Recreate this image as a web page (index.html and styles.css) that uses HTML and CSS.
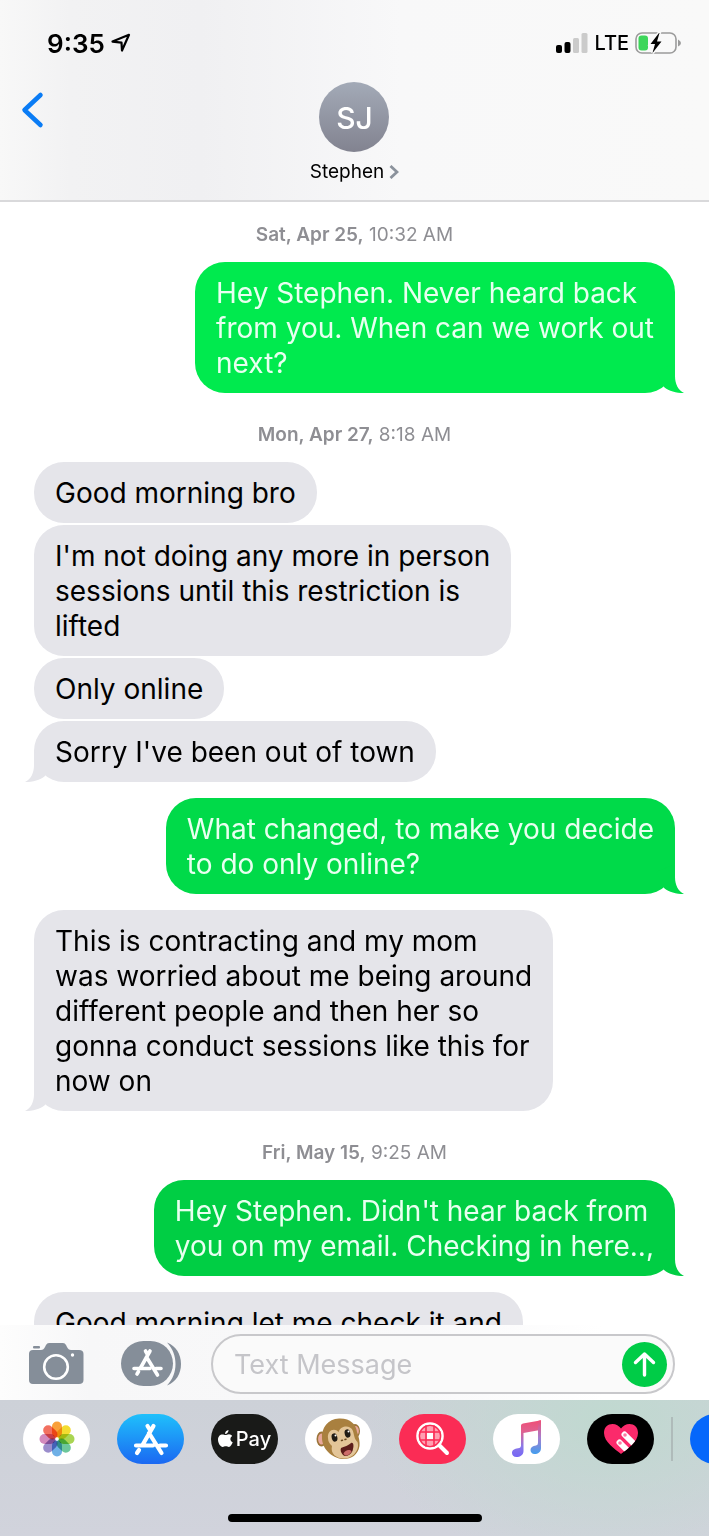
FILE: index.html
```html
<!DOCTYPE html>
<html lang="en">

<head>
  <meta charset="UTF-8">
  <meta name="viewport" content="width=device-width, initial-scale=1.0">
  <title>Stephen</title>
  <link rel="stylesheet" href="styles.css">
</head>

<body>
  <header class="header">
    <div class="status-bar">
      <div class="status-time">
        <span>9:35</span>
        <svg width="20" height="20" viewBox="0 0 20 20" fill="none" stroke="#000" stroke-width="2.2" stroke-linejoin="round"><path d="M1.500 8.600L18 1.800L11 17.500L10.500 9.600Z"/></svg>
      </div>
      <div class="status-icons">
        <svg width="32" height="20" viewBox="0 0 32 20">
          <rect x="0" y="12" width="6" height="8" rx="2"/>
          <rect x="8.500" y="9" width="6" height="11" rx="2"/>
          <rect x="17" y="5" width="6" height="15" rx="1.500" fill="#cbcbcb"/>
          <rect x="25.500" y="0" width="6" height="20" rx="1.500" fill="#cbcbcb"/>
        </svg>
        <span class="status-network">LTE</span>
        <svg width="46" height="22" viewBox="0 0 46 22">
          <rect x="1" y="1" width="40" height="20" rx="6" fill="none" stroke="#9b9b9b" stroke-width="1.600"/>
          <path d="M43 7.500Q46 9 46 11T43 14.500Z" fill="#9b9b9b"/>
          <rect x="3.500" y="3.500" width="9.500" height="15" rx="3" fill="#3dd65a"/>
          <path d="M24 1L15.500 12H20L17.500 21L26.500 9.500H22L24.500 1Z" fill="#000" stroke="#f9f9f9" stroke-width="3" paint-order="stroke"/>
        </svg>
      </div>
    </div>
    <div class="nav">
      <button class="back" aria-label="Back">
        <svg width="26" height="38" viewBox="0 0 26 38" fill="none" stroke="#0a7cf5" stroke-width="4.500" stroke-linecap="round" stroke-linejoin="round"><path d="M20.500 4L4.500 19L20.500 34"/></svg>
      </button>
      <button class="contact">
        <span class="avatar">SJ</span>
        <span class="contact-name">Stephen
          <svg width="10" height="14" viewBox="0 0 10 14" fill="none" stroke="#8b929c" stroke-width="2.800"><path d="M1.500 1L8 7L1.500 13"/></svg>
        </span>
      </button>
    </div>
  </header>

  <main class="thread">
    <p class="stamp"><b>Sat, Apr 25,</b> 10:32 AM</p>
    <div class="group sent">
      <p class="bubble tail green-light">Hey Stephen. Never heard back<br>from you. When can we work out<br>next?</p>
    </div>

    <p class="stamp"><b>Mon, Apr 27,</b> 8:18 AM</p>
    <div class="group received">
      <p class="bubble">Good morning bro</p>
      <p class="bubble">I'm not doing any more in person<br>sessions until this restriction is<br>lifted</p>
      <p class="bubble">Only online</p>
      <p class="bubble tail">Sorry I've been out of town</p>
    </div>
    <div class="group sent">
      <p class="bubble tail green-mid">What changed, to make you decide<br>to do only online?</p>
    </div>
    <div class="group received">
      <p class="bubble tail">This is contracting and my mom<br>was worried about me being around<br>different people and then her so<br>gonna conduct sessions like this for<br>now on</p>
    </div>

    <p class="stamp"><b>Fri, May 15,</b> 9:25 AM</p>
    <div class="group sent">
      <p class="bubble tail green-dark">Hey Stephen. Didn't hear back from<br>you on my email. Checking in here..,</p>
    </div>
    <div class="group received">
      <p class="bubble bubble-cut">Good morning let me check it and</p>
    </div>
  </main>

  <form class="compose">
    <button class="tool" type="button" aria-label="Camera">
      <svg width="56" height="44" viewBox="0 0 56 44">
        <rect x="5" y="4" width="7" height="2.500" rx="1" fill="#858e99"/>
        <path d="M5 8H13C15 8 16 7 17 5L18 3Q19 1 21 1H35Q37 1 38 3L39 5C40 7 41 8 43 8H51Q55.500 8 55.500 12V38Q55.500 42 51 42H5Q1 42 1 38V12Q1 8 5 8Z" fill="#858e99"/>
        <circle cx="28" cy="25" r="11.800" fill="none" stroke="#fff" stroke-width="2.600"/>
        <circle cx="44.500" cy="13" r="1.700" fill="#fff"/>
      </svg>
    </button>
    <button class="tool" type="button" aria-label="Apps">
      <svg width="60" height="46" viewBox="0 0 60 46">
        <path d="M46 1.500C55 5 60 13 60 23S55 41 46 44.500C52 38 54.500 31 54.500 23S52 8 46 1.500Z" fill="#858e99"/>
        <rect x="0" y="0" width="52" height="45" rx="22.500" fill="#858e99"/>
        <g fill="none" stroke="#fff" stroke-width="3.600" stroke-linecap="round">
          <path d="M24.500 10L26.500 13.500M29 10L19.500 27M25.500 16L36.500 34M17.500 30.500L16 33"/>
          <path d="M13 27.500H29M35 27.500H40"/>
        </g>
      </svg>
    </button>
    <div class="field">
      <input class="field-input" type="text" placeholder="Text Message" aria-label="Text Message">
      <button class="send" type="submit" aria-label="Send">
        <svg width="45" height="45" viewBox="0 0 45 45" fill="none" stroke="#fff" stroke-width="3.400" stroke-linecap="round" stroke-linejoin="round"><path d="M22.500 33V12M13.500 20.500L22.500 12L31.500 20.500"/></svg>
      </button>
    </div>
  </form>

  <footer class="drawer">
    <nav class="apps">
      <button class="app app-white" aria-label="Photos">
        <svg width="36" height="36" viewBox="-18 -18 36 36">
          <g class="petals">
            <rect x="-5" y="-17.500" width="10" height="16" rx="5" fill="#f9a03a"/>
            <rect x="-5" y="-17.500" width="10" height="16" rx="5" fill="#f3dc30" transform="rotate(45)"/>
            <rect x="-5" y="-17.500" width="10" height="16" rx="5" fill="#a9d552" transform="rotate(90)"/>
            <rect x="-5" y="-17.500" width="10" height="16" rx="5" fill="#6cc79b" transform="rotate(135)"/>
            <rect x="-5" y="-17.500" width="10" height="16" rx="5" fill="#6fb0e6" transform="rotate(180)"/>
            <rect x="-5" y="-17.500" width="10" height="16" rx="5" fill="#9b8dcc" transform="rotate(225)"/>
            <rect x="-5" y="-17.500" width="10" height="16" rx="5" fill="#d38abd" transform="rotate(270)"/>
            <rect x="-5" y="-17.500" width="10" height="16" rx="5" fill="#f27060" transform="rotate(315)"/>
          </g>
          <circle r="1.500" fill="#fff"/>
        </svg>
      </button>
      <button class="app app-store" aria-label="App Store">
        <svg width="38" height="34" viewBox="0 0 38 34" fill="none" stroke="#fff" stroke-width="4.200" stroke-linecap="round">
          <path d="M15.500 4L18 8M21.500 4L10.500 23M17 11L29.500 31M7 28L5 31M4 23.500H21M28 23.500H34"/>
        </svg>
      </button>
      <button class="app app-pay" aria-label="Apple Pay">
        <svg width="15" height="18" viewBox="0 0 15 18" fill="#fff">
          <path d="M10.500 0C10.600 2 9 4 7 4C7 2 8.600 .3 10.500 0Z"/>
          <path d="M7.500 5C8.500 5 9.300 4.200 11 4.200C12.300 4.200 13.500 5 14.200 6C11.500 7.500 12 11.300 14.700 12.300C14 14.300 12.500 17 10.900 17C9.700 17 9.300 16.300 7.800 16.300S5.800 17 4.700 17C2.500 17 0 13 0 9.700C0 6.300 2.200 4.400 4.300 4.400C5.700 4.400 6.500 5 7.500 5Z"/>
        </svg>
        <span>Pay</span>
      </button>
      <button class="app app-white" aria-label="Animoji">
        <svg width="46" height="44" viewBox="0 0 46 44">
          <ellipse cx="5.500" cy="22" rx="5" ry="7.500" fill="#9b7438"/>
          <ellipse cx="5.500" cy="22" rx="3.400" ry="5.500" fill="#e9a89c"/>
          <ellipse cx="39" cy="14" rx="5" ry="7" fill="#9b7438"/>
          <ellipse cx="39.500" cy="14" rx="3.400" ry="5" fill="#e9a89c"/>
          <path d="M6 22C5 11 12 2 23 1.500C34 1 40 7 41 15C43 20 44 25 43.500 29C42 38 35 42 28 42C18 42 7 34 6 22Z" fill="#a9803f"/>
          <path d="M12 21C11 14 18 10 22.500 15C25 8 34 8 36.500 13C38.500 18 38 22 41.500 25C44 33 37 41 29 41.500C21 42 14 37 16 29C14 27 12 25 12 21Z" fill="#e3c598"/>
          <ellipse cx="18.500" cy="20.500" rx="2.800" ry="4.200" transform="rotate(-14 18.500 20.500)" fill="#201b14"/>
          <ellipse cx="31.500" cy="16.500" rx="2.800" ry="4.200" transform="rotate(-14 31.500 16.500)" fill="#201b14"/>
          <circle cx="19.500" cy="18.500" r="1" fill="#fff"/>
          <circle cx="32.500" cy="14.500" r="1" fill="#fff"/>
          <path d="M25.500 23.500L26.500 23.200M29 22.500L30 22.200" stroke="#6b4a20" stroke-width="1.500" stroke-linecap="round"/>
          <path d="M25 31C28 30 33 28 35 26C38 25 38 30 36.500 34C34 39 29 40 27 38C25 36 24 33 25 31Z" fill="#5c1d1b"/>
          <path d="M27.500 36.500C29 33 34 32 35.500 34.500C33 39 29 40 27.500 36.500Z" fill="#cc6c69"/>
        </svg>
      </button>
      <button class="app app-search" aria-label="Images">
        <svg width="34" height="34" viewBox="0 0 34 34" fill="none" stroke="#fff">
          <circle cx="14" cy="14" r="12.500" fill="#ff9fb1" stroke-width="2.600"/>
          <circle cx="14" cy="14" r="10.600" stroke="#fb2c55" stroke-width="1.400"/>
          <path d="M10 3.500V24.500M18 3.500V24.500M3.500 10H24.500M3.500 18H24.500" stroke="#fb2c55" stroke-width="1.600"/>
          <rect x="11" y="11" width="6" height="6" fill="#fff" stroke="none"/>
          <path d="M23.500 23.500L31 31" stroke-width="4" stroke-linecap="round"/>
        </svg>
      </button>
      <button class="app app-white" aria-label="Music">
        <svg width="32" height="40" viewBox="0 0 32 40">
          <defs>
            <linearGradient id="note" gradientUnits="userSpaceOnUse" x1="0" y1="2" x2="0" y2="38">
              <stop offset="0" stop-color="#ee5078"/>
              <stop offset=".3" stop-color="#df6291"/>
              <stop offset=".7" stop-color="#8a78e8"/>
              <stop offset="1" stop-color="#7667f5"/>
            </linearGradient>
            <linearGradient id="stem" gradientUnits="userSpaceOnUse" x1="0" y1="2" x2="0" y2="36">
              <stop offset="0" stop-color="#ee5078"/>
              <stop offset=".5" stop-color="#a47fd0"/>
              <stop offset="1" stop-color="#3ca0f0"/>
            </linearGradient>
          </defs>
          <path d="M10 6.500Q10 5 12 4.500L29 1.500V11L12.500 14V32C12.500 36 9 38 5.500 38C2.500 38 1 36 1 34C1 31 3.500 30 7 29.300Q10 29 10 26.500Z" fill="url(#note)"/>
          <path d="M27 2L30 1V29C30 33 27 35 23.500 35C21 35 19.500 33 19.500 31C19.500 28.500 21.500 27 25 26.500Q27 26 27 24Z" fill="url(#stem)"/>
        </svg>
      </button>
      <button class="app app-touch" aria-label="Digital Touch">
        <svg width="36" height="32" viewBox="0 0 36 32">
          <defs>
            <clipPath id="heart"><path d="M18 31C12 26 1 19 1 10C1 4 5 1 9.500 1C13 1 16 3 18 5.500C20 3 23 1 26.500 1C31 1 35 4 35 10C35 19 24 26 18 31Z"/></clipPath>
          </defs>
          <g clip-path="url(#heart)">
            <rect width="36" height="32" fill="#fb2a6b"/>
            <path d="M16.500 19.500L29 32M21.500 11.500L37 27" stroke="#fff" stroke-width="6" stroke-linecap="round"/>
            <circle cx="17" cy="20" r="1.800" fill="#fb7ba3"/>
            <circle cx="22" cy="12" r="1.800" fill="#fb7ba3"/>
          </g>
        </svg>
      </button>
      <span class="divider"></span>
      <button class="app app-blue" aria-label="More apps"></button>
    </nav>
    <div class="home-bar"></div>
  </footer>
</body>

</html>
```
FILE: styles.css
```css
* {
  box-sizing: border-box;
}

body {
  margin: 0;
  height: 100vh;
  display: flex;
  flex-direction: column;
  overflow: hidden;
  background: #fff;
  color: #000;
  font-family: Inter, "Liberation Sans", sans-serif;
}

button {
  display: flex;
  align-items: center;
  justify-content: center;
  padding: 0;
  border: none;
  background: none;
  color: inherit;
  font-family: inherit;
}

svg {
  display: block;
  flex: none;
}

p {
  margin: 0;
}

/* Header */
.header {
  flex: none;
  border-bottom: 2px solid #d9d9db;
  background: linear-gradient(90deg, #f8f8f8 0, #f2f2f3 70px, #f0f0f2 200px, #f8f8f9 400px, #f9f9f9 100%);
}

.status-bar {
  display: flex;
  justify-content: space-between;
  align-items: center;
  padding: 28px 28px 0 47px;
}

.status-time,
.status-icons {
  display: flex;
  align-items: center;
  gap: 6px;
  height: 30px;
}

.status-time {
  font-size: 26px;
  font-weight: 600;
}

.status-network {
  font-size: 20px;
  font-weight: 500;
}

.nav {
  display: grid;
  grid-template-columns: 1fr auto 1fr;
  align-items: start;
  padding: 24px 20px 16px;
}

.back {
  justify-self: start;
  margin-top: 9px;
}

.contact {
  flex-direction: column;
  gap: 8px;
}

.avatar {
  width: 70px;
  height: 70px;
  border-radius: 50%;
  background: linear-gradient(#a3aab7, #828390);
  color: #fff;
  font-size: 30px;
  font-weight: 500;
  line-height: 72px;
}

.contact-name {
  display: flex;
  align-items: center;
  gap: 5px;
  font-size: 19px;
  line-height: 24px;
}

/* Messages */
.thread {
  flex: 1;
  min-height: 0;
  display: flex;
  flex-direction: column;
  gap: 16px;
  padding: 7px 34px 0;
  overflow: hidden;
}

.stamp {
  flex: none;
  margin-top: 15px;
  color: #8e8e93;
  font-size: 19px;
  line-height: 22px;
  text-align: center;
}

.stamp b {
  font-weight: 600;
}

.group {
  flex: none;
  display: flex;
  flex-direction: column;
  gap: 2px;
}

.sent {
  align-items: flex-end;
}

.received {
  align-items: flex-start;
}

.bubble {
  position: relative;
  isolation: isolate;
  padding: 14px 21px 12px;
  border-radius: 30px;
  background: #e5e5ea;
  font-size: 28px;
  line-height: 35px;
  white-space: nowrap;
}

.bubble-cut {
  padding-bottom: 48px;
}

.sent .bubble {
  color: #e8fff0;
}

.sent .green-light {
  background: #00ea4e;
}

.sent .green-mid {
  background: #00da49;
}

.sent .green-dark {
  background: #00ce44;
}

/* Small curl at the lower corner of the last bubble in a group */
.tail::before {
  content: "";
  position: absolute;
  bottom: 0;
  z-index: -1;
  width: 38px;
  height: 30px;
  background: inherit;
}

.sent .tail::before {
  right: -9px;
  clip-path: path("M29 0V13C29 21 32 27 38 30C30 30 23 28 18 24L10 8Z");
}

.received .tail::before {
  left: -9px;
  clip-path: path("M9 0V13C9 21 6 27 0 30C8 30 15 28 20 24L28 8Z");
}

/* Compose bar */
.compose {
  flex: none;
  display: flex;
  align-items: center;
  padding: 9px 34px 6px 28px;
  background: linear-gradient(90deg, #fdfdfd, #f7f7f8 90px, #f9f9fa 60%, #fff 85%);
}

.tool {
  flex: none;
  margin-right: 37px;
}

.tool + .tool {
  margin-right: 30px;
}

.field {
  flex: 1;
  min-width: 0;
  display: flex;
  align-items: center;
  height: 60px;
  padding: 0 6px 0 21px;
  border: 2px solid #c8c8cb;
  border-radius: 30px;
  background: #fafafa;
}

.field-input {
  flex: 1;
  width: 100%;
  min-width: 0;
  padding: 0;
  border: none;
  outline: none;
  background: none;
  font-family: inherit;
  font-size: 27px;
}

.field-input::placeholder {
  color: #c5c5c9;
  opacity: 1;
}

.send {
  flex: none;
  width: 45px;
  height: 45px;
  border-radius: 50%;
  background: #00cc47;
}

/* App drawer */
.drawer {
  flex: none;
  height: 136px;
  overflow: hidden;
  background:
    radial-gradient(ellipse 240px 150px at 86% 20px, #c0d9d0, rgba(192, 217, 208, 0)),
    linear-gradient(#cdd1d8, #d1d3dc);
}

.apps {
  display: flex;
  align-items: center;
  gap: 27px;
  padding: 14px 0 0 23px;
}

.app {
  flex: none;
  width: 67px;
  height: 50px;
  border-radius: 25px;
}

.app-white {
  background: #fff;
}

.petals rect {
  mix-blend-mode: multiply;
}

.app-store {
  background: linear-gradient(#1fc0fb, #1b68f2);
}

.app-pay {
  gap: 3px;
  background: #191a18;
  color: #fff;
  font-size: 20px;
  font-weight: 500;
}

.app-search {
  background: #fb2c55;
}

.app-touch {
  background: #000;
}

.app-blue {
  background: #0567fb;
}

.divider {
  flex: none;
  width: 2px;
  height: 44px;
  margin: 0 -10px;
  background: #afbbba;
}

.home-bar {
  width: 254px;
  height: 8px;
  margin: 50px auto 0;
  border-radius: 4px;
  background: #000;
}
```
